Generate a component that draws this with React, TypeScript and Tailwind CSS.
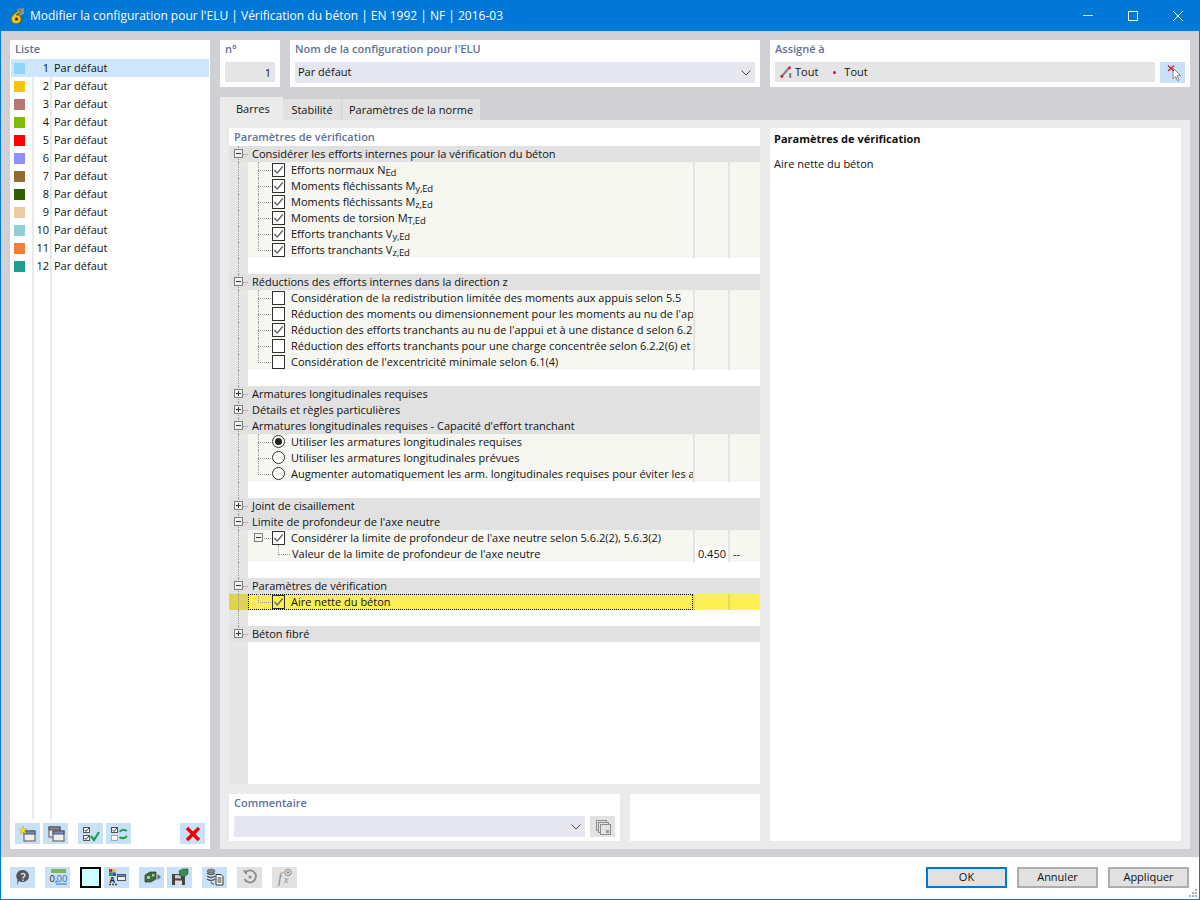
import React from "react";

const FONT = "font-['Open_Sans','Noto_Sans',sans-serif]";
const colors = ["#8fd7f7","#f7c600","#b97474","#80bb00","#ff0000","#8f8fff","#936a2f","#345c00","#eccba0","#90d0d5","#ef7f3a","#1f9f90"];

type Row =
  | { t: "h"; open: boolean; label: string; last?: boolean }
  | { t: "c"; on: boolean; label: React.ReactNode; last?: boolean; yellow?: boolean; first?: boolean }
  | { t: "r"; on: boolean; label: string; last?: boolean; first?: boolean }
  | { t: "n"; label: string }
  | { t: "v"; label: string }
  | { t: "b" };

const S = ({ children }: { children: React.ReactNode }) => (
  <span className="text-[9.5px] relative top-[2px] tracking-[-0.2px]">{children}</span>
);

const rows: Row[] = [
  { t: "h", open: true, label: "Considérer les efforts internes pour la vérification du béton" },
  { t: "c", on: true, first: true, label: <>Efforts normaux N<S>Ed</S></> },
  { t: "c", on: true, label: <>Moments fléchissants M<S>y,Ed</S></> },
  { t: "c", on: true, label: <>Moments fléchissants M<S>z,Ed</S></> },
  { t: "c", on: true, label: <>Moments de torsion M<S>T,Ed</S></> },
  { t: "c", on: true, label: <>Efforts tranchants V<S>y,Ed</S></> },
  { t: "c", on: true, last: true, label: <>Efforts tranchants V<S>z,Ed</S></> },
  { t: "b" },
  { t: "h", open: true, label: "Réductions des efforts internes dans la direction z" },
  { t: "c", on: false, first: true, label: "Considération de la redistribution limitée des moments aux appuis selon 5.5" },
  { t: "c", on: false, label: "Réduction des moments ou dimensionnement pour les moments au nu de l'appui selon 5.3.2.2(3), (4)" },
  { t: "c", on: true, label: "Réduction des efforts tranchants au nu de l'appui et à une distance d selon 6.2.1(8)" },
  { t: "c", on: false, label: "Réduction des efforts tranchants pour une charge concentrée selon 6.2.2(6) et 6.2.3(8)" },
  { t: "c", on: false, last: true, label: "Considération de l'excentricité minimale selon 6.1(4)" },
  { t: "b" },
  { t: "h", open: false, label: "Armatures longitudinales requises" },
  { t: "h", open: false, label: "Détails et règles particulières" },
  { t: "h", open: true, label: "Armatures longitudinales requises - Capacité d'effort tranchant" },
  { t: "r", on: true, first: true, label: "Utiliser les armatures longitudinales requises" },
  { t: "r", on: false, label: "Utiliser les armatures longitudinales prévues" },
  { t: "r", on: false, last: true, label: "Augmenter automatiquement les arm. longitudinales requises pour éviter les armatures d'effort tranchant" },
  { t: "b" },
  { t: "h", open: false, label: "Joint de cisaillement" },
  { t: "h", open: true, label: "Limite de profondeur de l'axe neutre" },
  { t: "n", label: "Considérer la limite de profondeur de l'axe neutre selon 5.6.2(2), 5.6.3(2)" },
  { t: "v", label: "Valeur de la limite de profondeur de l'axe neutre" },
  { t: "b" },
  { t: "h", open: true, label: "Paramètres de vérification" },
  { t: "c", on: true, yellow: true, first: true, last: true, label: "Aire nette du béton" },
  { t: "b" },
  { t: "h", open: false, last: true, label: "Béton fibré" },
];

const dotH = "absolute border-t border-dotted border-[#9a9a9a]";
const dotV = "absolute border-l border-dotted border-[#9a9a9a]";

const Box = ({ open, cls }: { open: boolean; cls: string }) => (
  <span className={`absolute w-[9px] h-[9px] border border-[#7d7d7d] bg-[#f2f2f2] ${cls}`}>
    <span className="absolute left-[1px] top-[3px] w-[5px] h-px bg-[#333]" />
    {!open && <span className="absolute left-[3px] top-[1px] w-px h-[5px] bg-[#333]" />}
  </span>
);

const Check = ({ on, yellow }: { on: boolean; yellow?: boolean }) => (
  <span className={`absolute left-[24px] top-[1px] w-[13px] h-[14px] border border-[#303030] ${yellow ? "" : "bg-white"}`}>
    {on && (
      <svg viewBox="0 0 13 14" className="absolute -left-px -top-px w-[13px] h-[14px]">
        <path d="M2.5 7 L5.3 10 L10.7 3.5" fill="none" stroke="#666" strokeWidth="1.4" />
      </svg>
    )}
  </span>
);

const Radio = ({ on }: { on: boolean }) => (
  <span className="absolute left-[24px] top-[1px] w-[13px] h-[13px] rounded-full border border-[#303030] bg-white flex items-center justify-center">
    {on && <span className="w-[7px] h-[7px] rounded-full bg-[#222]" />}
  </span>
);

const Cols = ({ yellow, value, unit }: { yellow?: boolean; value?: string; unit?: string }) => (
  <>
    <div className={`w-[2px] shrink-0 ${yellow ? "bg-[#e8dc50]" : "bg-[#e4e4e4]"}`} />
    <div className={`w-[33px] shrink-0 text-right pr-[2px] ${value ? "bg-white" : ""}`}>{value}</div>
    <div className={`w-[2px] shrink-0 ${yellow ? "bg-[#e8dc50]" : "bg-[#e4e4e4]"}`} />
    <div className="flex-1 pl-[3px]">{unit}</div>
  </>
);

const TreeRow = ({ r, gutterLine }: { r: Row; gutterLine: boolean }) => {
  const yellow = r.t === "c" && r.yellow;
  return (
    <div className={`flex h-[16px] leading-[16px] ${r.t === "h" ? "bg-[#e1e1e1]" : ""}`}>
      <div className={`relative w-[19px] shrink-0 ${yellow ? "bg-[#e1d44c]" : r.t === "h" ? "" : "bg-[#e6e6e6]"}`}>
        {gutterLine && <span className={`${dotV} left-[9px] top-0 h-full`} />}
        {r.t === "h" && r.last && <span className="absolute left-[9px] top-[8px] w-px h-[8px] bg-[#e1e1e1]" />}
        {r.t === "h" && (
          <>
            <span className={`${dotH} left-[14px] top-[8px] w-[5px]`} />
            <Box open={r.open} cls="left-[5px] top-[3px]" />
          </>
        )}
      </div>
      {r.t === "h" && (
        <div className="flex-1 pl-[4px] whitespace-nowrap text-[#111]">{r.label}</div>
      )}
      {r.t === "b" && <div className="flex-1 bg-white" />}
      {(r.t === "c" || r.t === "r") && (
        <div className={`flex flex-1 min-w-0 ${yellow ? "bg-[#fcef52]" : "bg-[#f6f7f1]"}`}>
          <div className={`relative w-[445px] shrink-0 overflow-hidden whitespace-nowrap pl-[43px] text-[#111] ${yellow ? "outline-1 -outline-offset-1 outline-dotted outline-black" : ""}`}>
            <span className={`${dotV} left-[10px] top-0 ${r.last ? "h-[9px]" : "h-full"}`} />
            <span className={`${dotH} left-[10px] top-[8px] w-[13px]`} />
            {r.t === "c" ? <Check on={r.on} yellow={yellow} /> : <Radio on={r.on} />}
            {r.label}
          </div>
          <Cols yellow={yellow} />
        </div>
      )}
      {r.t === "n" && (
        <div className="flex flex-1 min-w-0 bg-[#f6f7f1]">
          <div className="relative w-[445px] shrink-0 overflow-hidden whitespace-nowrap pl-[43px] text-[#111]">
            <Box open cls="left-[6px] top-[3px]" />
            <span className={`${dotH} left-[16px] top-[8px] w-[7px]`} />
            <span className={`${dotV} left-[30px] top-[15px] h-[1px]`} />
            <Check on />
            {r.label}
          </div>
          <Cols />
        </div>
      )}
      {r.t === "v" && (
        <div className="flex flex-1 min-w-0 bg-[#f6f7f1]">
          <div className="relative w-[445px] shrink-0 overflow-hidden whitespace-nowrap pl-[44px] text-[#111]">
            <span className={`${dotV} left-[30px] top-0 h-[9px]`} />
            <span className={`${dotH} left-[30px] top-[8px] w-[12px]`} />
            {r.label}
          </div>
          <Cols value="0.450" unit="--" />
        </div>
      )}
    </div>
  );
};

const Btn = ({ children, off, cls = "" }: { children: React.ReactNode; off?: boolean; cls?: string }) => (
  <div className={`w-[25px] h-[21px] shrink-0 flex items-center justify-center ${off ? "bg-[#e2e2e2]" : "bg-[#c9e1f6]"} ${cls}`}>
    {children}
  </div>
);

const I = ({ children }: { children: React.ReactNode }) => (
  <svg viewBox="0 0 20 18" className="w-[20px] h-[18px]">{children}</svg>
);

const Win = ({ x, y, cls = "#6f8fc8" }: { x: number; y: number; cls?: string }) => (
  <g>
    <rect x={x} y={y} width="11" height="10" fill="#eee" stroke="#555" strokeWidth="1" />
    <rect x={x} y={y} width="11" height="3" fill={cls} stroke="#555" strokeWidth="1" />
  </g>
);

const Chev = () => (
  <svg viewBox="0 0 10 6" className="w-[10px] h-[6px]"><path d="M0.5 0.5 L5 5 L9.5 0.5" fill="none" stroke="#444" strokeWidth="1" /></svg>
);

const Label = ({ children }: { children: React.ReactNode }) => (
  <div className="text-[#5f7298] font-semibold leading-[16px]">{children}</div>
);

export default function App() {
  return (
    <div className={`w-[1200px] h-[900px] flex flex-col border border-t-0 border-[#0078d7] bg-white text-[11px] text-[#111] overflow-hidden ${FONT}`}>
      {/* title bar */}
      <div className="h-[31px] shrink-0 -mx-px bg-[#0078d7] flex items-center text-white text-[12px]">
        <svg viewBox="0 0 18 18" className="w-[18px] h-[18px] ml-[8px] mr-[4px]">
          <path d="M9 2 L16 1 L16 7 L11 9 Z" fill="#8a8f98" />
          <path d="M11 3 L5 8 A5 5 0 1 0 13 11 A4 4 0 0 0 8 8 L13 4 Z" fill="#f2c21a" stroke="#6b5200" strokeWidth="0.8" />
          <circle cx="8.5" cy="12" r="1.6" fill="#333" />
        </svg>
        <span className="whitespace-nowrap">Modifier la configuration pour l'ELU | Vérification du béton | EN 1992 | NF | 2016-03</span>
        <div className="ml-auto flex items-center">
          <div className="w-[45px] flex justify-center"><span className="block w-[10px] h-px bg-[#cfe4f7]" /></div>
          <div className="w-[45px] flex justify-center"><span className="block w-[10px] h-[10px] border border-white" /></div>
          <div className="w-[45px] flex justify-center">
            <svg viewBox="0 0 10 10" className="w-[10px] h-[10px]"><path d="M0 0 L10 10 M10 0 L0 10" stroke="#fff" strokeWidth="1" /></svg>
          </div>
        </div>
      </div>

      {/* body */}
      <div className="h-[826px] shrink-0 bg-[#d0d0d5] pt-[9px] pb-[8px] px-[9px] flex gap-[10px]">
        {/* list panel */}
        <div className="w-[200px] shrink-0 bg-white flex flex-col relative">
          <div className="h-[19px] pl-[5px] pt-[1px]"><Label>Liste</Label></div>
          <div className="flex-1 relative px-px">
            <div className="absolute left-[22px] top-0 h-[760px] w-[1.5px] bg-[#e9e9e9]" />
            <div className="absolute left-[40px] top-0 h-[760px] w-[1.5px] bg-[#e9e9e9]" />
            {colors.map((c, i) => (
              <div key={i} className={`relative flex items-center h-[18px] ${i === 0 ? "bg-[#cde6fb]" : ""}`}>
                <span className="ml-[3px] w-[11px] h-[11px]" style={{ background: c }} />
                <span className="w-[24px] text-right">{i + 1}</span>
                <span className="ml-[5px]">Par défaut</span>
              </div>
            ))}
          </div>
          <div className="h-[26px] pb-[5px] flex items-start pl-[5px]">
            <Btn>
              <I><Win x={6} y={6} /><path d="M5 1 L6 4 L9 4 L6.7 6 L7.6 9 L5 7.3 L2.4 9 L3.3 6 L1 4 L4 4 Z" fill="#f6e52a" stroke="#b9a500" strokeWidth="0.5" /></I>
            </Btn>
            <Btn cls="ml-[3px]"><I><Win x={3} y={2} cls="#888" /><Win x={7} y={6} /></I></Btn>
            <Btn cls="ml-[10px]">
              <I>
                <rect x="2.5" y="2.5" width="6" height="5" fill="#fff" stroke="#555" /><rect x="2.5" y="10.5" width="6" height="5" fill="#fff" stroke="#555" />
                <path d="M3.5 5 L5 6.5 L8 3 M3.5 13 L5 14.5 L8 11" fill="none" stroke="#333" />
                <path d="M10 11 L13 15 L18 7" fill="none" stroke="#17a04a" strokeWidth="2.2" />
              </I>
            </Btn>
            <Btn cls="ml-[3px]">
              <I>
                <rect x="2.5" y="2.5" width="6" height="5" fill="#fff" stroke="#555" /><rect x="2.5" y="10.5" width="6" height="5" fill="#fff" stroke="#aaa" />
                <path d="M3.5 5 L5 6.5 L8 3" fill="none" stroke="#333" />
                <path d="M10.5 7 Q14 3 18 6 M18 11 Q14 15 10.5 12" fill="none" stroke="#17a04a" strokeWidth="1.8" />
              </I>
            </Btn>
            <Btn cls="ml-[49px]">
              <I><path d="M4 3 L16 15 M16 3 L4 15" stroke="#f00000" strokeWidth="3.4" /></I>
            </Btn>
          </div>
        </div>

        {/* right column */}
        <div className="w-[970px] shrink-0 flex flex-col">
          <div className="flex h-[47px] shrink-0 gap-[10px]">
            <div className="w-[60px] bg-white px-[5px] pt-[1px]">
              <Label>n°</Label>
              <div className="mt-[5px] h-[20px] bg-[#e5e5e5] text-right pr-[4px] leading-[22px]">1</div>
            </div>
            <div className="w-[470px] bg-white px-[5px] pt-[1px]">
              <Label>Nom de la configuration pour l'ELU</Label>
              <div className="mt-[5px] h-[21px] bg-[#e6e6f1] pl-[3px] pr-[4px] flex items-center justify-between"><span>Par défaut</span><Chev /></div>
            </div>
            <div className="w-[420px] bg-white px-[5px] pt-[1px]">
              <Label>Assigné à</Label>
              <div className="mt-[5px] flex gap-[5px]">
                <div className="w-[380px] h-[20px] bg-[#e5e5e5] flex items-center pl-[5px]">
                  <svg viewBox="0 0 12 12" className="w-[12px] h-[12px] mr-[3px]">
                    <path d="M1.5 10.5 L9 2" stroke="#7d7d90" strokeWidth="2" /><circle cx="1.8" cy="10.5" r="1.4" fill="#d01030" /><circle cx="9.5" cy="1.8" r="1.4" fill="#d01030" />
                    <path d="M9 8 H11.5 M10.2 8 V11 M9 11 H11.5" stroke="#333" strokeWidth="0.8" />
                  </svg>
                  <span>Tout</span>
                  <span className="ml-[15px] w-[3px] h-[3px] rounded-full bg-[#d01030]" />
                  <span className="ml-[8px]">Tout</span>
                </div>
                <Btn>
                  <I>
                    <path d="M10 4 L10 15 L12.5 12.5 L14.5 16.5 L16 16 L14 11.8 L17.5 11.5 Z" fill="#fff" stroke="#8a8a8a" />
                    <path d="M5 1.5 L11 7 M11 1.5 L5 7" stroke="#e01030" strokeWidth="1.2" />
                  </I>
                </Btn>
              </div>
            </div>
          </div>

          {/* tabs */}
          <div className="mt-[10px] h-[23px] shrink-0 flex items-end">
            <div className="w-[63px] h-[23px] bg-[#ebebeb] pl-[16px] leading-[24px]">Barres</div>
            <div className="w-[59px] h-[21px] bg-[#e2e2e2] text-center leading-[22px] border-r border-[#d4d4d4]">Stabilité</div>
            <div className="w-[138px] h-[21px] bg-[#e2e2e2] text-center leading-[22px]">Paramètres de la norme</div>
          </div>

          {/* tab page */}
          <div className="flex-1 min-h-0 bg-[#ebebeb] p-[8px] pr-[9px] pl-[9px] flex gap-[10px]">
            <div className="w-[531px] shrink-0 flex flex-col">
              <div className="h-[18px] bg-white px-[5px] pt-px shrink-0"><Label>Paramètres de vérification</Label></div>
              <div className="flex-1 min-h-0 flex flex-col">
                {rows.map((r, i) => (
                  <TreeRow key={i} r={r} gutterLine />
                ))}
                <div className="flex-1 flex">
                  <div className="w-[19px] bg-[#e6e6e6]" />
                  <div className="flex-1 bg-white" />
                </div>
              </div>
              <div className="mt-[10px] h-[47px] shrink-0 flex gap-[10px]">
                <div className="w-[391px] bg-white px-[5px] pt-px">
                  <Label>Commentaire</Label>
                  <div className="mt-[5px] flex gap-[5px]">
                    <div className="w-[351px] h-[21px] bg-[#e6e6f1] flex items-center justify-end pr-[4px]"><Chev /></div>
                    <Btn off>
                      <I>
                        <rect x="3.5" y="2.5" width="10" height="10" fill="#e2e2e2" stroke="#8c8c8c" />
                        <rect x="5.5" y="4.5" width="10" height="10" fill="#e2e2e2" stroke="#8c8c8c" />
                        <rect x="7.5" y="6.5" width="10" height="10" fill="#e2e2e2" stroke="#8c8c8c" />
                        <rect x="13" y="12" width="3" height="3" fill="#999" />
                      </I>
                    </Btn>
                  </div>
                </div>
                <div className="flex-1 bg-white" />
              </div>
            </div>
            <div className="flex-1 bg-white px-[4px] pt-[3px]">
              <div className="font-bold leading-[16px] text-[#111]">Paramètres de vérification</div>
              <div className="mt-[9px] leading-[16px]">Aire nette du béton</div>
            </div>
          </div>
        </div>
      </div>

      {/* footer */}
      <div className="flex-1 relative flex items-center pl-[9px] pr-[10px] pb-[2px]">
        <Btn>
          <I>
            <path d="M10 2 A6.5 6 0 1 1 6 13 L4 17 L4.5 11.5 A6.5 6 0 0 1 10 2 Z" fill="#555" />
            <path d="M8 6.5 Q10 4.5 12 6.5 Q12.5 8.5 10 9.5 L10 10.5" fill="none" stroke="#c9e1f6" strokeWidth="1.4" />
            <rect x="9.3" y="11.5" width="1.5" height="1.5" fill="#c9e1f6" />
          </I>
        </Btn>
        <Btn cls="ml-[10px]">
          <svg viewBox="0 0 20 18" className="w-[20px] h-[18px]">
            <rect x="3" y="1" width="15" height="4" fill="#7cb55a" />
            <text x="1.5" y="14" fontSize="9.5" fill="#222" fontFamily="Open Sans">0,</text>
            <text x="8.5" y="14" fontSize="9.5" fill="#2a6fc9" fontFamily="Open Sans">00</text>
            <path d="M8 16 H19" stroke="#2a6fc9" />
          </svg>
        </Btn>
        <div className="ml-[10px] w-[21px] h-[21px] bg-[#ccffff] border-2 border-black shrink-0" />
        <Btn cls="ml-[3px]">
          <I>
            <rect x="2" y="1" width="3.5" height="3.5" fill="#e02020" /><rect x="5.5" y="1" width="3.5" height="3.5" fill="#e6d020" /><rect x="2" y="4.5" width="3.5" height="3.5" fill="#2ea040" /><rect x="5.5" y="4.5" width="3.5" height="3.5" fill="#3050d0" />
            <text x="2.5" y="14.5" fontSize="8" fontWeight="700" fill="#222" fontFamily="Open Sans">A</text>
            <rect x="10.5" y="6.5" width="8" height="6" fill="#eee" stroke="#555" /><rect x="10.5" y="6.5" width="8" height="2" fill="#6f8fc8" stroke="#555" />
            <path d="M2 16.5 H10" stroke="#444" strokeWidth="1.5" strokeDasharray="2 1" />
          </I>
        </Btn>
        <Btn cls="ml-[10px]">
          <I>
            <path d="M3 7 L8 4 L14 4 L14 11 L9 14 L3 14 Z" fill="#3c6b42" stroke="#24402a" strokeWidth="0.7" />
            <rect x="5" y="8" width="3" height="3" fill="#9ccf9f" /><rect x="10" y="6" width="2.5" height="2.5" fill="#9ccf9f" />
            <path d="M15.5 6 L19 9 L15.5 12 Z" fill="#6a6a6a" />
          </I>
        </Btn>
        <Btn cls="ml-[3px]">
          <I>
            <path d="M2 6 H13 L15 8 V17 H2 Z" fill="#444" />
            <rect x="5" y="7" width="6" height="3.5" fill="#ccc" /><rect x="5" y="12.5" width="7" height="4.5" fill="#ddd" />
            <path d="M9 3 L13 1 L18 1 L18 6 L14 9 L10 8 Z" fill="#3c8b52" stroke="#24502f" strokeWidth="0.6" />
          </I>
        </Btn>
        <Btn cls="ml-[10px]">
          <I>
            <ellipse cx="6" cy="3" rx="4" ry="1.8" fill="#888" stroke="#444" strokeWidth="0.6" />
            <path d="M2 5 Q6 8 10 5 M2 8 Q6 11 10 8 M2 11 Q6 14 10 11" fill="none" stroke="#555" strokeWidth="1.3" />
            <path d="M6 14 Q6 16 9 16" fill="none" stroke="#444" />
            <path d="M11 6.5 H16 L18 8.5 V17 H11 Z" fill="#fff" stroke="#333" />
            <path d="M12.5 10 H16.5 M12.5 12 H16.5 M12.5 14 H16.5" stroke="#333" />
          </I>
        </Btn>
        <Btn off cls="ml-[10px]">
          <I>
            <path d="M5 5 A6 6 0 1 1 4.5 11" fill="none" stroke="#8c8c8c" strokeWidth="1.8" />
            <path d="M2.5 2.5 L7 2.5 L7 7 Z" fill="#8c8c8c" />
            <circle cx="10" cy="9" r="1.6" fill="#8c8c8c" />
          </I>
        </Btn>
        <Btn off cls="ml-[10px]">
          <svg viewBox="0 0 20 18" className="w-[20px] h-[18px]">
            <text x="3" y="15" fontSize="14" fontStyle="italic" fontFamily="Liberation Serif" fill="#8c8c8c">f</text>
            <text x="9" y="15" fontSize="10" fontStyle="italic" fontFamily="Liberation Serif" fill="#8c8c8c">x</text>
            <circle cx="13" cy="4.5" r="3.2" fill="none" stroke="#8c8c8c" />
            <circle cx="13" cy="4.5" r="1.2" fill="#8c8c8c" />
          </svg>
        </Btn>
        <div className="ml-auto flex gap-[10px]">
          <div className="w-[81px] h-[21px] bg-[#e1e1e1] border-2 border-[#0078d7] flex items-center justify-center">OK</div>
          <div className="w-[81px] h-[21px] bg-[#e1e1e1] border-2 border-[#adadad] flex items-center justify-center">Annuler</div>
          <div className="w-[81px] h-[21px] bg-[#e1e1e1] border-2 border-[#adadad] flex items-center justify-center">Appliquer</div>
        </div>
        <svg viewBox="0 0 10 10" className="absolute right-px bottom-px w-[10px] h-[10px]">
          <g fill="#b0b0b0">
            <rect x="7" y="1" width="2" height="2" /><rect x="4" y="4" width="2" height="2" /><rect x="7" y="4" width="2" height="2" />
            <rect x="1" y="7" width="2" height="2" /><rect x="4" y="7" width="2" height="2" /><rect x="7" y="7" width="2" height="2" />
          </g>
        </svg>
      </div>
    </div>
  );
}
